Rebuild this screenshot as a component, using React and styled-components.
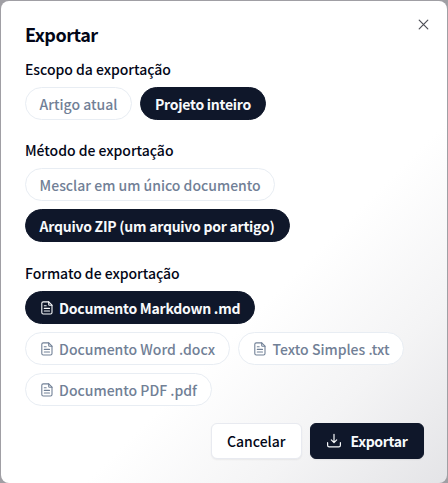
import React from "react";
import styled, { createGlobalStyle } from "styled-components";

const Page = createGlobalStyle`
  * { box-sizing: border-box; }
  html, body { margin: 0; background: #a09fa4; overflow: hidden; }
  body, button { font-family: "Noto Sans CJK SC", "Noto Sans", sans-serif; }
`;

const Dialog = styled.main`
  position: relative;
  width: 446px;
  height: 482px;
  margin: 1px 1px 0;
  padding: 0 23.5px 0 24px;
  border-radius: 8px;
  color: #020617;
  background: linear-gradient(135deg, #fff 0%, #fff 61%, #f4f4f5 80%, #e4e4e7 100%);
`;

const Title = styled.h1`
  margin: 0;
  padding-top: 23px;
  height: 56px;
  font-size: 18px;
  font-weight: 700;
  line-height: 20px;
  letter-spacing: -0.5px;
`;

const CloseButton = styled.button`
  position: absolute;
  top: 16px;
  right: 16px;
  width: 15px;
  height: 15px;
  padding: 0;
  border: 0;
  background: none;
  color: #4d4e56;
  svg { display: block; }
`;

const Section = styled.section`
  height: ${(p) => p.$height}px;
`;

const Label = styled.h2`
  margin: 0;
  height: 30px;
  font-size: 14px;
  font-weight: 500;
  line-height: 24px;
  letter-spacing: -0.03px;
`;

const Chips = styled.div`
  display: flex;
  flex-wrap: wrap;
  gap: 7.600px 8px;
  margin-left: -0.4px;
`;

const Chip = styled.button`
  display: flex;
  align-items: center;
  gap: 5.500px;
  width: ${(p) => p.$width}px;
  height: 33.400px;
  padding: 0 0 0 14px;
  border: 1px solid ${(p) => (p.$active ? "#0f172a" : "#e8edf3")};
  border-radius: 17px;
  background: ${(p) => (p.$active ? "#0f172a" : "#fff")};
  color: ${(p) => (p.$active ? "#f8fafc" : "#718096")};
  font-size: 14px;
  font-weight: ${(p) => (p.$active ? 700 : 500)};
  letter-spacing: ${(p) => (p.$active ? -0.25 : 0)}px;
  line-height: 20px;
  white-space: nowrap;
  svg { flex: none; }
`;

const Actions = styled.footer`
  display: flex;
  justify-content: flex-end;
  gap: 8px;
`;

const Action = styled.button`
  display: flex;
  align-items: center;
  justify-content: center;
  gap: 8.500px;
  width: ${(p) => p.$width}px;
  height: 36px;
  padding: 0;
  border: 1px solid ${(p) => (p.$primary ? "#0f172a" : "#e8eaf0")};
  border-radius: 6px;
  background: ${(p) => (p.$primary ? "#0f172a" : "#fff")};
  color: ${(p) => (p.$primary ? "#f8fafc" : "#020617")};
  box-shadow: 0 1px 2px rgba(0, 0, 0, 0.06);
  font-size: 14px;
  font-weight: ${(p) => (p.$primary ? 700 : 500)};
  letter-spacing: ${(p) => (p.$primary ? -0.35 : 0)}px;
  line-height: 20px;
`;

const FileIcon = () => (
  <svg width="14" height="14" viewBox="0 0 14 14" fill="none" stroke="currentColor" strokeWidth="1.1" strokeLinecap="round" strokeLinejoin="round">
    <path d="M8.700.9H3.300c-.9 0-1.500.6-1.500 1.400v9.200c0 .9.6 1.500 1.500 1.500h7.200c.9 0 1.500-.6 1.500-1.500V4.200Z" />
    <path d="M8.700.9v2.500c0 .5.300.8.800.8H12M4.300 4.700h1.900M4.300 7.400h5.200M4.300 10h5.200" />
  </svg>
);

const DownloadIcon = () => (
  <svg width="16" height="16" viewBox="0 0 16 16" fill="none" stroke="currentColor" strokeWidth="1.2" strokeLinecap="round" strokeLinejoin="round">
    <path d="M8 1.300v8.200M5.300 6.900 8 9.600l2.700-2.700M1.600 9.700v2.500c0 1 .6 1.600 1.600 1.600h9.600c1 0 1.600-.6 1.600-1.600V9.700" />
  </svg>
);

const CloseIcon = () => (
  <svg width="15" height="15" viewBox="0 0 15 15" fill="none" stroke="currentColor" strokeWidth="1.2" strokeLinecap="round">
    <path d="m3.200 3.200 8.600 8.600M11.800 3.200 3.200 11.800" />
  </svg>
);

export default function App() {
  return (
    <>
      <Page />
      <Dialog>
        <Title>Exportar</Title>
        <CloseButton aria-label="Fechar"><CloseIcon /></CloseButton>
        <Section $height={81}>
          <Label>Escopo da exportação</Label>
          <Chips>
            <Chip $width={107.4}>Artigo atual</Chip>
            <Chip $width={125.5} $active>Projeto inteiro</Chip>
          </Chips>
        </Section>
        <Section $height={123}>
          <Label>Método de exportação</Label>
          <Chips>
            <Chip $width={250.7}>Mesclar em um único documento</Chip>
            <Chip $width={265} $active>Arquivo ZIP (um arquivo por artigo)</Chip>
          </Chips>
        </Section>
        <Section $height={162}>
          <Label>Formato de exportação</Label>
          <Chips>
            <Chip $width={230.7} $active><FileIcon />Documento Markdown .md</Chip>
            <Chip $width={205.5}><FileIcon />Documento Word .docx</Chip>
            <Chip $width={165.7}><FileIcon />Texto Simples .txt</Chip>
            <Chip $width={187.5}><FileIcon />Documento PDF .pdf</Chip>
          </Chips>
        </Section>
        <Actions>
          <Action $width={91.5}>Cancelar</Action>
          <Action $width={113.5} $primary><DownloadIcon />Exportar</Action>
        </Actions>
      </Dialog>
    </>
  );
}
